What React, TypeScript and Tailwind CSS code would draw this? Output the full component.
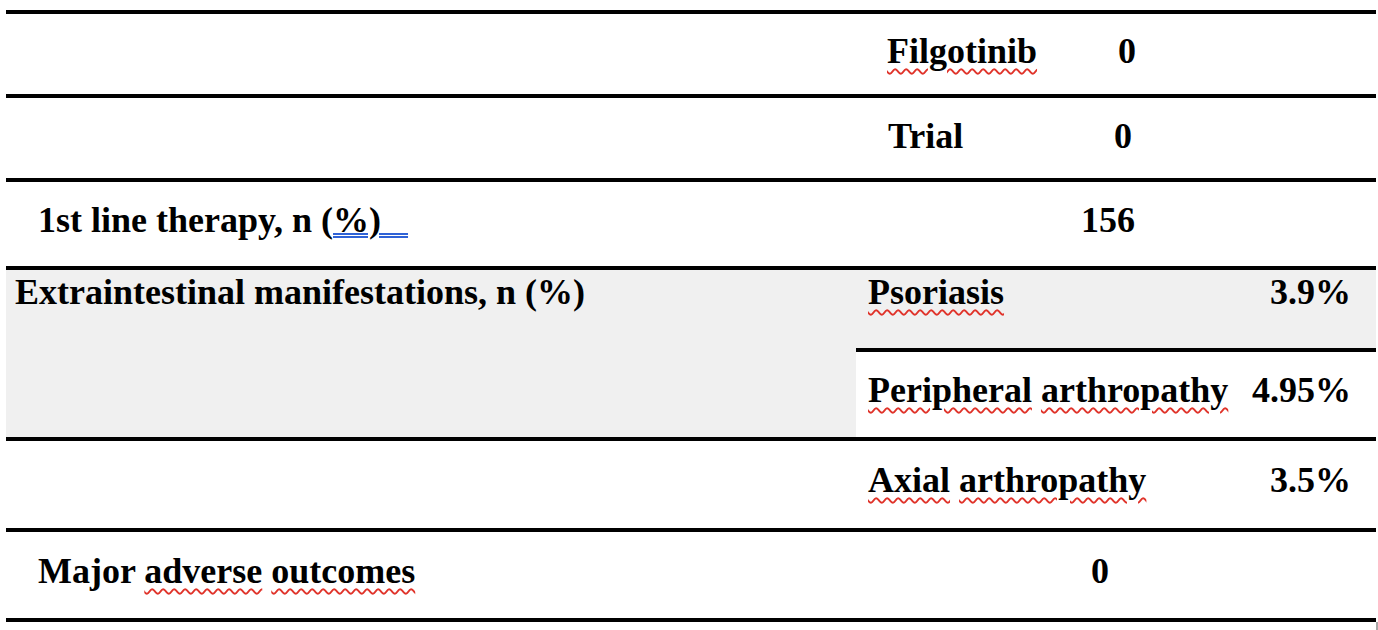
import React from 'react';

// spell-check squiggle under a single word, like Word does
const Sq: React.FC<{ children: React.ReactNode }> = ({ children }) => (
  <span className="underline decoration-wavy decoration-[#e0332a] decoration-[1.5px] underline-offset-[5px]">
    {children}
  </span>
);

const rowLine = 'border-t-4 border-black flex';

export default function App() {
  return (
    <div
      className="w-[1378px] h-[630px] bg-white text-black font-bold text-[36px] leading-none pt-[10px]"
      style={{ fontFamily: '"Liberation Serif", "Times New Roman", serif' }}
    >
      <div className="ml-[6px] w-[1370px]">
        {/* Filgotinib */}
        <div className={`${rowLine} h-[84px]`}>
          <div className="w-[850px]" />
          <div className="flex-1 pt-[19px] pl-[31px] flex">
            <span className="w-[231px]">
              <Sq>Filgotinib</Sq>
            </span>
            <span>0</span>
          </div>
        </div>

        {/* Trial */}
        <div className={`${rowLine} h-[84px]`}>
          <div className="w-[850px]" />
          <div className="flex-1 pt-[20px] pl-[32px] flex">
            <span className="w-[226px]">Trial</span>
            <span>0</span>
          </div>
        </div>

        {/* 1st line therapy */}
        <div className={`${rowLine} h-[88px]`}>
          <div className="w-[850px] pt-[20px] pl-[32px] whitespace-pre">
            1st line therapy, n (
            <span className="underline decoration-double decoration-[#2f62d6] decoration-[2px] underline-offset-[1px]">
              {'%)\u00a0\u00a0\u00a0'}
            </span>
          </div>
          <div className="flex-1 pt-[20px] pl-[225px]">156</div>
        </div>

        {/* Extraintestinal manifestations */}
        <div className={`${rowLine} h-[171px]`}>
          <div className="w-[850px] bg-[#f0f0f0] pt-[4px] pl-[9px]">
            Extraintestinal manifestations, n (%)
          </div>
          <div className="flex-1 flex flex-col">
            <div className="h-[78px] bg-[#f0f0f0] pt-[4px] pl-[12px] pr-[25px] flex justify-between">
              <Sq>Psoriasis</Sq>
              <span>3.9%</span>
            </div>
            <div className="flex-1 border-t-4 border-black pt-[20px] pl-[12px] pr-[25px] flex justify-between">
              <span>
                <Sq>Peripheral</Sq> <Sq>arthropathy</Sq>
              </span>
              <span>4.95%</span>
            </div>
          </div>
        </div>

        {/* Axial arthropathy */}
        <div className={`${rowLine} h-[91px]`}>
          <div className="w-[850px]" />
          <div className="flex-1 pt-[21px] pl-[12px] pr-[25px] flex justify-between">
            <span>
              <Sq>Axial</Sq> <Sq>arthropathy</Sq>
            </span>
            <span>3.5%</span>
          </div>
        </div>

        {/* Major adverse outcomes */}
        <div className={`${rowLine} h-[90px]`}>
          <div className="w-[850px] pt-[21px] pl-[32px]">
            Major <Sq>adverse</Sq> <Sq>outcomes</Sq>
          </div>
          <div className="flex-1 pt-[21px] pl-[235px]">0</div>
        </div>

        <div className="border-t-4 border-black" />
      </div>
      <div className="flex justify-end">
        <div className="w-[2px] h-[8px] bg-[#a8a8a8]" />
      </div>
    </div>
  );
}
